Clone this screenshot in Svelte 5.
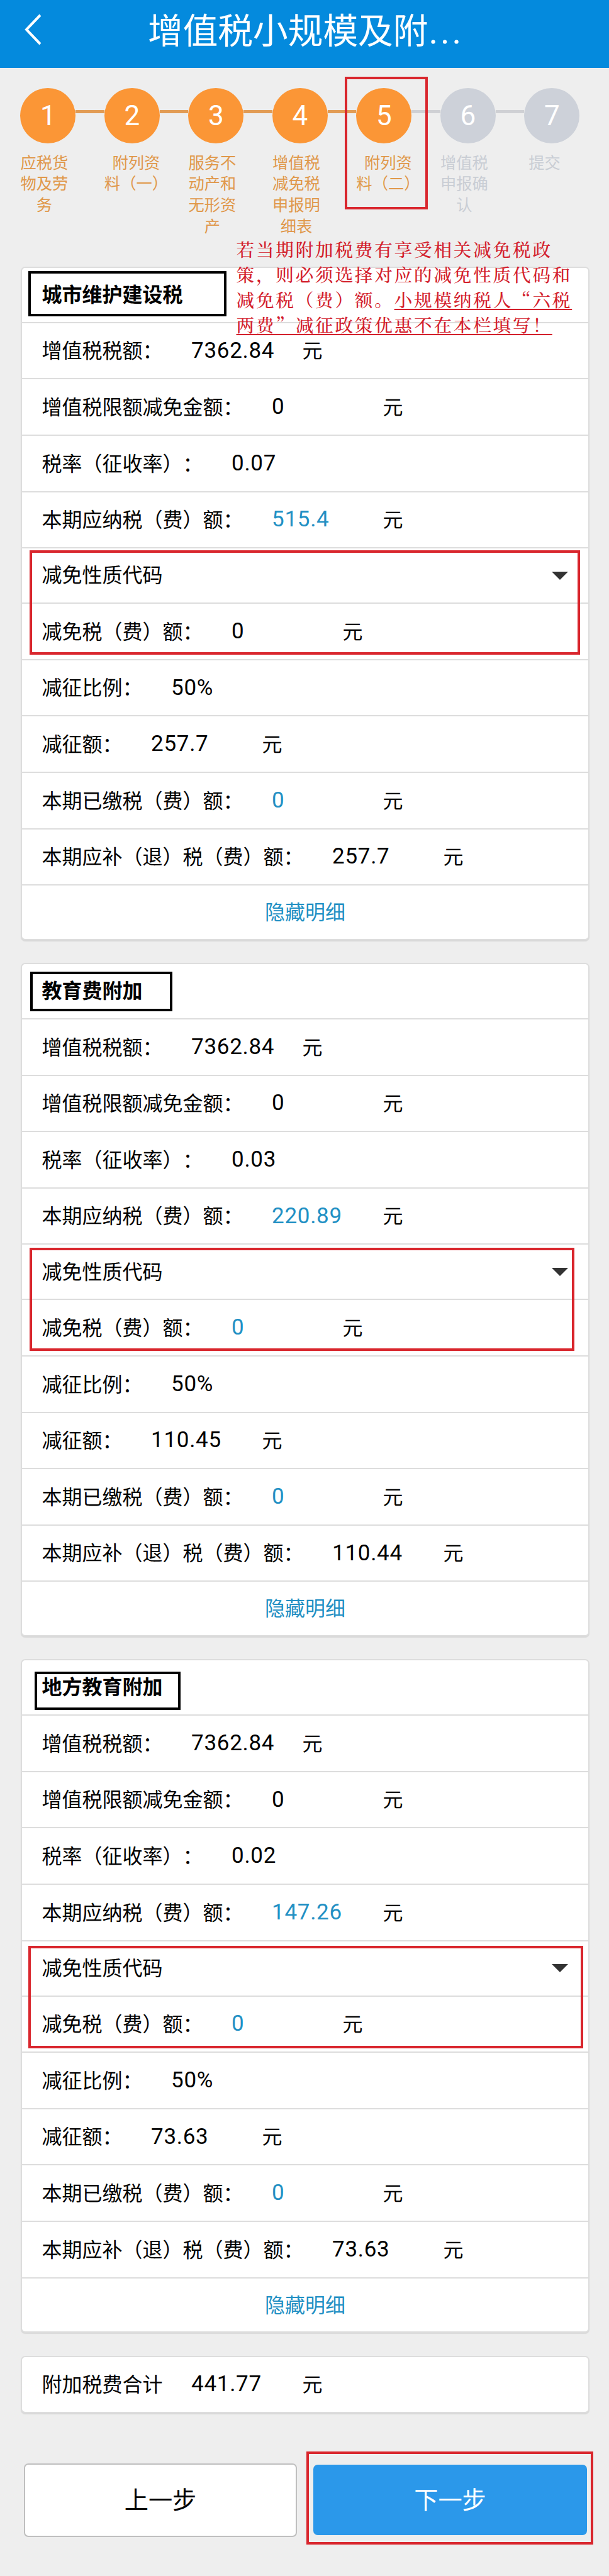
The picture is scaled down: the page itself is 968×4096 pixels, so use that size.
<script>
  const steps = [
    { lines: ['应税货', '物及劳', '务'], done: true },
    { lines: ['附列资', '料（一）'], done: true, shift: 'right' },
    { lines: ['服务不', '动产和', '无形资', '产'], done: true },
    { lines: ['增值税', '减免税', '申报明', '细表'], done: true },
    { lines: ['附列资', '料（二）'], done: true, shift: 'right' },
    { lines: ['增值税', '申报确', '认'], done: false },
    { lines: ['提交'], done: false, shift: 'left' }
  ];

  function rows(rate, due, reliefBlue, cut, payable) {
    return [
      { label: '增值税税额：', value: '7362.84', unit: true },
      { label: '增值税限额减免金额：', value: '0', unit: true },
      { label: '税率（征收率）：', value: rate },
      { label: '本期应纳税（费）额：', value: due, unit: true, blue: true },
      { label: '减免性质代码', select: true },
      { label: '减免税（费）额：', value: '0', unit: true, blue: reliefBlue },
      { label: '减征比例：', value: '50%' },
      { label: '减征额：', value: cut, unit: true },
      { label: '本期已缴税（费）额：', value: '0', unit: true, blue: true },
      { label: '本期应补（退）税（费）额：', value: payable, unit: true }
    ];
  }

  const cards = [
    { title: '城市维护建设税', rows: rows('0.07', '515.4', false, '257.7', '257.7') },
    { title: '教育费附加', rows: rows('0.03', '220.89', true, '110.45', '110.44') },
    { title: '地方教育附加', rows: rows('0.02', '147.26', true, '73.63', '73.63') }
  ];
</script>

<div class="page" lang="zh-CN">
  <header>
    <svg class="back" viewBox="0 0 30 50" width="30" height="50" aria-hidden="true">
      <path d="M26 2 L4 25 L26 48" fill="none" stroke="#fff" stroke-width="4" />
    </svg>
    <h1>增值税小规模及附<span>...</span></h1>
  </header>

  <ol class="steps">
    {#each steps as step, i}
      <li class:pending={!step.done}>
        <div class="node">
          <i class:hidden={i === 0} class:gray={!step.done}></i>
          <b>{i + 1}</b>
          <i class:hidden={i === steps.length - 1} class:gray={i >= 4}></i>
        </div>
        <div class="caption {step.shift ?? ''}">
          {#each step.lines as line}<span>{line}</span>{/each}
        </div>
      </li>
    {/each}
  </ol>

  <main>
    {#each cards as card}
      <section class="card">
        <h2>{card.title}</h2>
        {#each card.rows as row}
          <div class="row" class:select={row.select}>
            <span class="label">{row.label}</span>
            {#if row.select}
              <svg width="26" height="13" viewBox="0 0 26 13" aria-hidden="true"><path d="M0 0H26L13 13Z" fill="#333" /></svg>
            {:else}
              <span class="value" class:blue={row.blue}>{row.value}</span>
              {#if row.unit}<span class="unit">元</span>{/if}
            {/if}
          </div>
        {/each}
        <div class="toggle">隐藏明细</div>
      </section>
    {/each}
    <section class="card total">
      <div class="row">
        <span class="label">附加税费合计</span>
        <span class="value">441.77</span>
        <span class="unit">元</span>
      </div>
    </section>
  </main>

  <footer>
    <button class="prev">上一步</button>
    <button class="next">下一步</button>
  </footer>

  <p class="note">若当期附加税费有享受相关减免税政<br />策，则必须选择对应的减免性质代码和<br />减免税（费）额。<u>小规模纳税人“六税</u><br /><u>两费”减征政策优惠不在本栏填写！</u></p>
  <div class="mark step-mark"></div>
  <div class="mark black title-a"></div>
  <div class="mark black title-b"></div>
  <div class="mark black title-c"></div>
  <div class="mark relief-a"></div>
  <div class="mark relief-b"></div>
  <div class="mark relief-c"></div>
  <div class="mark next-mark"></div>
</div>

<style>
  :global(body) { background: #eee; }
  .page {
    position: relative;
    box-sizing: border-box;
    width: 968px;
    height: 4096px;
    overflow: hidden;
    background: #eee;
    color: #000;
    font: 32px/1.2 'Noto Sans CJK SC', sans-serif;
  }
  header {
    display: flex;
    align-items: center;
    box-sizing: border-box;
    height: 108px;
    padding: 0 0 14px 38px;
    background: #048add;
    color: #fff;
  }
  .back { flex: none; }
  h1 {
    margin: 0 0 0 167px;
    font-size: 55.7px;
    font-weight: 400;
    line-height: 80px;
    white-space: nowrap;
  }
  h1 span { font-family: Roboto, sans-serif; letter-spacing: 3.8px; margin-left: 1px; }

  .steps {
    display: flex;
    box-sizing: border-box;
    height: 316px;
    margin: 0;
    padding: 32px 0 0 9.7px;
    list-style: none;
  }
  .steps li { width: 133.5px; flex: none; color: #e0984a; }
  .steps li.pending { color: #c9cdd4; }
  .node { display: flex; align-items: center; height: 88px; }
  .node i { flex: 1; height: 5px; margin-bottom: 13px; background: #e29c55; }
  .node i.gray { background: #cfd0d4; }
  .node i.hidden { visibility: hidden; }
  .node b {
    width: 88px;
    height: 88px;
    border-radius: 50%;
    background: #fb9636;
    color: #fff;
    text-align: center;
    font: 400 44px/89px Roboto, sans-serif;
  }
  .pending .node b { background: #cdd1d9; }
  .caption {
    display: flex;
    flex-direction: column;
    align-items: center;
    padding: 12.5px 12px 0 0;
    font-size: 25.3px;
    line-height: 33.8px;
    white-space: nowrap;
  }
  .caption.right { padding: 12.5px 0 0 13px; }
  .caption.left { padding-right: 24px; }

  main { display: flex; flex-direction: column; gap: 36.7px; padding: 0 31px 0 33px; }
  .card {
    box-sizing: border-box;
    border: 2px solid #ddd;
    border-radius: 7px;
    background: #fff;
    box-shadow: 0 2px 1px #d9d9d9;
  }
  h2 {
    box-sizing: border-box;
    height: 87.8px;
    margin: 0;
    padding-left: 31.5px;
    border-bottom: 2px solid #ddd;
    font-size: 32px;
    font-weight: 700;
    line-height: 81px;
  }
  .row {
    display: flex;
    align-items: center;
    box-sizing: border-box;
    height: 89.6px;
    padding: 0 32px 0 31.5px;
    border-bottom: 2px solid #ddd;
    white-space: nowrap;
  }
  .row.select { height: 88px; justify-content: space-between; }
  .label { text-spacing-trim: space-all; }
  .label, .unit { padding-bottom: 4px; }
  .select .label { padding-bottom: 5px; }
  .value {
    box-sizing: border-box;
    width: 222px;
    padding-left: 45.5px;
    font: 35px/40px Roboto, sans-serif;
    letter-spacing: 0.7px;
  }
  .blue, .toggle { color: #2290c4; }
  .toggle { height: 84.4px; line-height: 80.5px; text-align: center; }
  .total .row { height: 87px; border: 0; }

  footer { display: flex; align-items: center; gap: 26px; padding: 80px 35px 0 38px; }
  button {
    box-sizing: border-box;
    padding: 0 0 5px;
    border: 0;
    border-radius: 7px;
    font: 38.2px/1 'Noto Sans CJK SC', sans-serif;
  }
  .prev { width: 434px; height: 117px; border: 2px solid #bfbfbf; background: #fff; color: #000; }
  .next { width: 435px; height: 112px; background: #2b98ea; color: #fff; }

  .note {
    position: absolute;
    left: 375.5px;
    top: 376px;
    margin: 0;
    color: #d3202c;
    font-family: KaiTi, 'Noto Serif CJK SC', serif;
    font-size: 28.6px;
    font-weight: 500;
    line-height: 39.9px;
    letter-spacing: 2.8px;
    white-space: nowrap;
    text-spacing-trim: space-all;
  }
  .note u { text-decoration-thickness: 2px; text-underline-offset: 3px; text-decoration-skip-ink: none; }
  .mark { position: absolute; box-sizing: border-box; border: 4px solid #d9262d; }
  .black { border-color: #000; }
  .step-mark { left: 548px; top: 122px; width: 132px; height: 211px; }
  .title-a { left: 45px; top: 431px; width: 315px; height: 72px; }
  .title-b { left: 48px; top: 1545px; width: 226px; height: 63px; }
  .title-c { left: 55px; top: 2658px; width: 232px; height: 61px; }
  .relief-a { left: 47px; top: 875px; width: 875px; height: 166px; }
  .relief-b { left: 47px; top: 1984px; width: 866px; height: 164px; }
  .relief-c { left: 45px; top: 3094px; width: 882px; height: 163px; }
  .next-mark { left: 487px; top: 3898px; width: 456px; height: 148px; }
</style>
